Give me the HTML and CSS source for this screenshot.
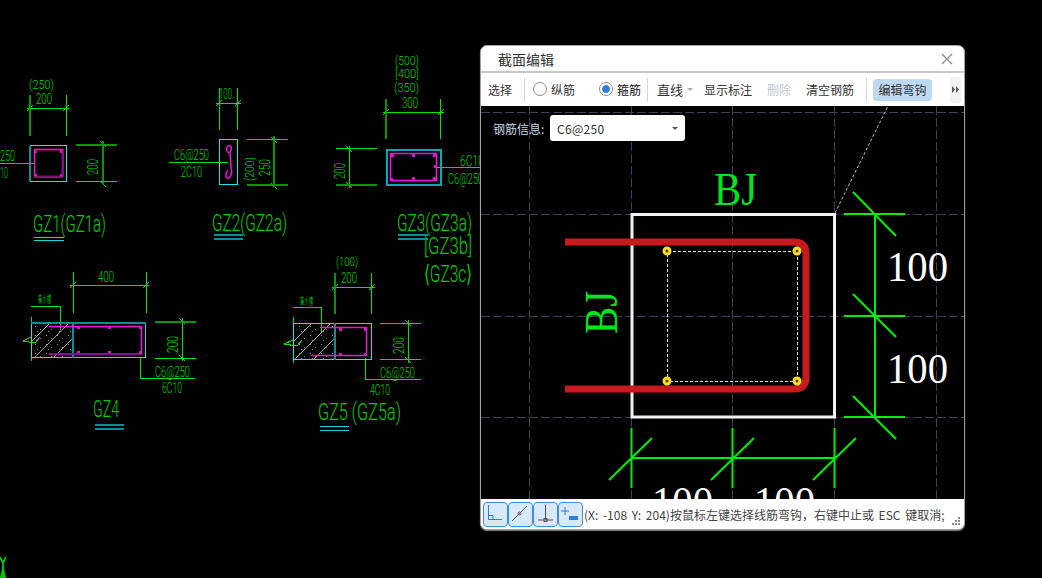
FILE: index.html
```html
<!DOCTYPE html>
<html lang="zh">
<head>
    <meta charset="UTF-8">
    <title>截面编辑</title>
    <link rel="stylesheet" href="styles.css">
</head>
<body>
    <!-- CAD drawing behind the dialog, coordinates are the drawing's own -->
    <svg class="cad" width="1042" height="578" viewBox="0 0 1042 578">
        <defs>
            <clipPath id="wall4"><rect x="31" y="322" width="42" height="36"/></clipPath>
            <clipPath id="wall5"><rect x="293" y="323" width="42" height="37"/></clipPath>
            <pattern id="speck" width="11" height="9" patternUnits="userSpaceOnUse">
                <rect x="2" y="2" width="1" height="1" fill="#999"/>
                <rect x="7" y="5" width="1" height="1" fill="#777"/>
                <rect x="4" y="7" width="1" height="1" fill="#888"/>
            </pattern>
        </defs>

        <!-- GZ1 -->
        <g class="dim">
            <path d="M66.500 95V136M27 108.500H69M27 111L33 105M63 111L69 105M76 181.500H117M100 141L106 147M100 181L106 187M0 163.500H35"/>
            <path class="dark" d="M30 95V136M76 145H117M103 141V184"/>
        </g>
        <rect class="col" x="30.500" y="145.500" width="36" height="36"/>
        <path class="col-dark" d="M30 146V181"/>
        <rect class="bar" x="34.500" y="149.500" width="28" height="27"/>
        <path class="bar-dark" d="M63 150V176M35 177H62"/>
        <path class="pin" d="M35 151h2v2h-2zM60 150h2v3h-2zM35 174h2v2h-2zM60 174h2v2h-2z"/>
        <text class="cad-t paren" x="29" y="89" textLength="25" lengthAdjust="spacingAndGlyphs">(250)</text>
        <text class="cad-t" x="36" y="104" textLength="16" lengthAdjust="spacingAndGlyphs">200</text>
        <text class="cad-t" x="0" y="161" textLength="15" lengthAdjust="spacingAndGlyphs">250</text>
        <text class="cad-t" x="0" y="178" textLength="8" lengthAdjust="spacingAndGlyphs">10</text>
        <text class="cad-t" transform="translate(98 175) rotate(-90)" textLength="16" lengthAdjust="spacingAndGlyphs">200</text>
        <text class="cad-title" x="33" y="232" textLength="73" lengthAdjust="spacingAndGlyphs">GZ1(GZ1a)</text>
        <path class="under" d="M34 237H64M34 240.500H64"/>

        <!-- GZ2 -->
        <g class="dim">
            <path d="M219.500 88V130M237.500 88V130M216 103.500H241M216 106L222 100M235 106L241 100M169 162.500H228M247 139.500H288M271 137L277 143M271 183L277 189"/>
            <path class="dark" d="M274 136V187M247 185H288"/>
        </g>
        <rect class="col" x="219.500" y="139.500" width="18" height="45"/>
        <path class="bar" d="M228 146C232 144 232 150 230 152L231 168C233 172 230 180 227 178C225 176 226 172 228 170"/>
        <path class="bar" d="M228 146C226 148 226 152 229 153"/>
        <text class="cad-t" x="219" y="99" textLength="13" lengthAdjust="spacingAndGlyphs">100</text>
        <text class="cad-t" x="174" y="160" textLength="35" lengthAdjust="spacingAndGlyphs">C6@250</text>
        <text class="cad-t" x="181" y="177" textLength="21" lengthAdjust="spacingAndGlyphs">2C10</text>
        <text class="cad-t paren" transform="translate(254 181) rotate(-90)" textLength="24" lengthAdjust="spacingAndGlyphs">(200)</text>
        <text class="cad-t" transform="translate(270 176) rotate(-90)" textLength="17" lengthAdjust="spacingAndGlyphs">250</text>
        <text class="cad-title" x="212" y="231" textLength="75" lengthAdjust="spacingAndGlyphs">GZ2(GZ2a)</text>
        <path class="under-dark" d="M214 234.500H243M214 238.500H243"/>

        <!-- GZ3 -->
        <g class="dim">
            <path d="M440.500 99V139M383 112.500H444M383 115L389 109M438 115L444 109M336 148.500H377M349.500 146V188M346 146L352 152M346 182L352 188M436 167.500H480"/>
            <path class="dark" d="M386 99V139M336 185H377"/>
        </g>
        <rect class="col-dark-r" x="386.500" y="149.500" width="54" height="35"/>
        <rect class="bar" x="390.500" y="153.500" width="46" height="27"/>
        <path class="pin" d="M391 154h3v3h-3zM412 154h3v3h-3zM433 154h3v3h-3zM391 178h2v2h-2zM412 177h3v3h-3zM433 177h3v3h-3zM434 165h2v3h-2z"/>
        <text class="cad-t paren" x="395" y="65" textLength="24" lengthAdjust="spacingAndGlyphs">(500)</text>
        <text class="cad-t paren" x="395" y="78" textLength="24" lengthAdjust="spacingAndGlyphs">[400]</text>
        <text class="cad-t paren" x="394" y="92" textLength="25" lengthAdjust="spacingAndGlyphs">(350)</text>
        <text class="cad-t" x="402" y="108" textLength="16" lengthAdjust="spacingAndGlyphs">300</text>
        <text class="cad-t" x="460" y="166" textLength="24" lengthAdjust="spacingAndGlyphs">6C10</text>
        <text class="cad-t" x="448" y="184" textLength="35" lengthAdjust="spacingAndGlyphs">C6@250</text>
        <text class="cad-t" transform="translate(345 179) rotate(-90)" textLength="16" lengthAdjust="spacingAndGlyphs">200</text>
        <text class="cad-title" x="397" y="231" textLength="75" lengthAdjust="spacingAndGlyphs">GZ3(GZ3a)</text>
        <text class="cad-title" x="424" y="254" textLength="48" lengthAdjust="spacingAndGlyphs">[GZ3b]</text>
        <text class="cad-title" x="424" y="282" textLength="48" lengthAdjust="spacingAndGlyphs">⟨GZ3c⟩</text>
        <path class="under-dark" d="M398 234.500H428M398 238.500H428"/>

        <!-- GZ4 -->
        <g class="dim">
            <path d="M73.500 272V313M146.500 272V313M70 285.500H149M70 288L76 282M143 288L149 282M155 358.500H196M182.500 318V361M179 318L185 324M179 355L185 361M140.500 358V378.500H195M31 306.500H60.500V330"/>
            <path class="dark" d="M155 322H196"/>
            <path d="M31.500 317V361M31 337L23 341L35 343L40 337"/>
        </g>
        <g clip-path="url(#wall4)">
            <rect x="31" y="322" width="42" height="36" fill="url(#speck)"/>
            <path class="hatch" d="M34 358L70 322M53 358L89 322M15 358L51 322"/>
        </g>
        <rect class="col" x="31.500" y="322.500" width="114" height="35"/>
        <path class="col-dark" d="M31 323H146M73 322V358"/>
        <path class="bar" d="M49 326.500H141.500V354"/>
        <path class="bar-dark" d="M49 354H142"/>
        <path class="pin" d="M77 326h3v3h-3zM108 326h3v3h-3zM139 326h3v3h-3zM77 351h3v2h-3zM108 351h3v2h-3zM139 351h3v3h-3z"/>
        <text class="cad-t note" x="38" y="303" textLength="13" lengthAdjust="spacingAndGlyphs">集水槽</text>
        <text class="cad-t" x="98" y="282" textLength="16" lengthAdjust="spacingAndGlyphs">400</text>
        <text class="cad-t" x="155" y="377" textLength="35" lengthAdjust="spacingAndGlyphs">C6@250</text>
        <text class="cad-t" x="162" y="393" textLength="20" lengthAdjust="spacingAndGlyphs">6C10</text>
        <text class="cad-t" transform="translate(178 353) rotate(-90)" textLength="17" lengthAdjust="spacingAndGlyphs">200</text>
        <text class="cad-title" x="93" y="417" textLength="26" lengthAdjust="spacingAndGlyphs">GZ4</text>
        <path class="under-dark" d="M95 425H124M95 428.500H124"/>

        <!-- GZ5 -->
        <g class="dim">
            <path d="M371.500 273V314M332 287.500H375M332 290L338 284M369 290L375 284M380 323.500H421M380 359.500H421M408.500 320V363M405 320L411 326M405 357L411 363M365.500 358V379.500H421M293 307.500H321.500V332"/>
            <path class="dark" d="M335 273V314"/>
            <path d="M293.500 317V363M293 340L284 344L297 346L302 340"/>
        </g>
        <g clip-path="url(#wall5)">
            <rect x="293" y="323" width="42" height="37" fill="url(#speck)"/>
            <path class="hatch" d="M294 360L331 323M313 360L350 323M275 360L312 323"/>
        </g>
        <rect class="col" x="293.500" y="323.500" width="78" height="36"/>
        <path class="col-dark" d="M335 323V360"/>
        <path class="bar" d="M320 327.500H366.500V355.500H311"/>
        <path class="pin" d="M339 328h3v3h-3zM364 328h3v3h-3zM339 353h3v2h-3zM364 353h3v3h-3z"/>
        <text class="cad-t note" x="300" y="305" textLength="13" lengthAdjust="spacingAndGlyphs">集水槽</text>
        <text class="cad-t paren" x="336" y="266" textLength="22" lengthAdjust="spacingAndGlyphs">(100)</text>
        <text class="cad-t" x="341" y="283" textLength="16" lengthAdjust="spacingAndGlyphs">200</text>
        <text class="cad-t" x="380" y="378" textLength="35" lengthAdjust="spacingAndGlyphs">C6@250</text>
        <text class="cad-t" x="370" y="395" textLength="20" lengthAdjust="spacingAndGlyphs">4C10</text>
        <text class="cad-t" transform="translate(404 354) rotate(-90)" textLength="17" lengthAdjust="spacingAndGlyphs">200</text>
        <text class="cad-title" x="318" y="420" textLength="83" lengthAdjust="spacingAndGlyphs">GZ5 (GZ5a)</text>
        <path class="under" d="M320 426H349M320 430H349"/>

        <!-- axis mark -->
        <path class="axis" d="M0 557L3 563L6 557M3 563V578"/>
        <path class="axis-fill" d="M3 564L0 578H6Z"/>
    </svg>

    <div class="dialog">
        <div class="title-bar">
            <span class="title">截面编辑</span>
            <svg class="close" width="12" height="12" viewBox="0 0 12 12"><path d="M1 1L11 11M11 1L1 11"/></svg>
        </div>

        <div class="toolbar">
            <span class="tool">选择</span>
            <span class="sep sep-a"></span>
            <span class="radio"></span>
            <span class="tool radio-label">纵筋</span>
            <span class="radio radio-on"></span>
            <span class="tool radio-label label-on">箍筋</span>
            <span class="sep sep-b"></span>
            <span class="tool line-type">直线</span>
            <span class="caret caret-grey"></span>
            <span class="tool show-dim">显示标注</span>
            <span class="tool tool-off">删除</span>
            <span class="tool clear-bars">清空钢筋</span>
            <span class="sep sep-c"></span>
            <span class="tool tool-on">编辑弯钩</span>
            <span class="more">
                <svg width="7" height="7" viewBox="0 0 7 7"><path d="M0 0L3 3.500L0 7ZM4 0L7 3.500L4 7Z"/></svg>
            </span>
        </div>

        <div class="canvas">
            <svg class="section-view" width="483" height="393" viewBox="481 106 483 393">
                <path class="grid" d="M529.500 106V499M631.500 106V499M732.500 106V499M834.500 106V499M936.500 106V499M481 112.500H964M481 214.500H964M481 316.500H964M481 417.500H964"/>
                <path class="leader" d="M835 213L888 106"/>
                <rect class="outline" x="632" y="214.500" width="202.500" height="202.500"/>
                <rect class="stirrup-guide" x="667.500" y="251.500" width="130" height="130"/>
                <path class="stirrup" d="M565 242H794Q806 242 806 254V377Q806 389 794 389H565"/>
                <g class="node">
                    <circle cx="667" cy="251" r="3"/>
                    <circle cx="797" cy="251" r="3"/>
                    <circle cx="667" cy="381" r="3"/>
                    <circle cx="797" cy="381" r="3"/>
                </g>
                <text class="label-bj" x="714" y="205" textLength="43" lengthAdjust="spacingAndGlyphs">BJ</text>
                <text class="label-bj" transform="translate(617 334) rotate(-90)" textLength="43" lengthAdjust="spacingAndGlyphs">BJ</text>
                <path class="dim-line" d="M875 214V417M844 214H905M844 316H905M844 417H905M853 192L896 236M853 294L896 337M853 396L896 439M631 458H834M631.500 428V488M732.500 428V488M834.500 428V488M609 480L652 438M711 480L754 438M813 480L856 438"/>
                <text class="label-dim" x="887" y="281" textLength="61" lengthAdjust="spacingAndGlyphs">100</text>
                <text class="label-dim" x="887" y="383" textLength="61" lengthAdjust="spacingAndGlyphs">100</text>
                <text class="label-dim" x="652" y="516" textLength="61" lengthAdjust="spacingAndGlyphs">100</text>
                <text class="label-dim" x="754" y="516" textLength="61" lengthAdjust="spacingAndGlyphs">100</text>
            </svg>
            <div class="bar-info">
                <span class="bar-info-label">钢筋信息:</span>
                <span class="select">C6@250<span class="caret"></span></span>
            </div>
        </div>

        <div class="status-bar">
            <span class="snap">
                <svg width="25" height="25" viewBox="0 0 25 25"><path class="blue-line" d="M5.500 3V17.500H19M5.500 13.500H10V17.500"/></svg>
            </span>
            <span class="snap">
                <svg width="25" height="25" viewBox="0 0 25 25"><path d="M4 19L19 4"/><circle cx="11.500" cy="11.500" r="1.500"/></svg>
            </span>
            <span class="snap">
                <svg width="25" height="25" viewBox="0 0 25 25"><path d="M12.500 3V18M5 18H20"/><rect x="11" y="16.500" width="3" height="3"/></svg>
            </span>
            <span class="snap">
                <svg width="25" height="25" viewBox="0 0 25 25"><path class="blue-line" d="M7 5V13M3 9H11"/><rect class="blue" x="11" y="14" width="9" height="4"/></svg>
            </span>
            <span class="status-text">(X: -108 Y: 204)按鼠标左键选择线筋弯钩，右键中止或 ESC 键取消;</span>
            <svg class="grip" width="9" height="9" viewBox="0 0 9 9">
                <path d="M6 0h2v2h-2zM3 3h2v2h-2zM6 3h2v2h-2zM0 6h2v2h-2zM3 6h2v2h-2zM6 6h2v2h-2z"/>
            </svg>
        </div>
    </div>
</body>
</html>
```

FILE: styles.css
```css
html, body {
    margin: 0;
    padding: 0;
    height: 100%;
    background-color: #000;
    overflow: hidden;
}
.cad {
    display: block;
}

/* drawing */
.dim path {
    fill: none;
    stroke: #00e600;
    stroke-width: 1;
    shape-rendering: crispEdges;
}
.dim path.dark {
    stroke: #009a00;
    stroke-width: 2;
}
.col, .col-dark-r {
    fill: none;
    stroke: #19e6e6;
    stroke-width: 1;
    shape-rendering: crispEdges;
}
.col-dark-r {
    stroke: #0ba8b0;
    stroke-width: 2;
}
.col-dark {
    fill: none;
    stroke: #0a8f98;
    stroke-width: 2;
    shape-rendering: crispEdges;
}
.bar {
    fill: none;
    stroke: #f010e0;
    stroke-width: 1.500;
}
.bar-dark {
    fill: none;
    stroke: #8c0a8c;
    stroke-width: 2;
    shape-rendering: crispEdges;
}
.pin {
    fill: #e012d0;
}
.hatch {
    fill: none;
    stroke: #a8a8a8;
    stroke-width: 1;
}
.under {
    fill: none;
    stroke: #12d8d8;
    stroke-width: 1;
    shape-rendering: crispEdges;
}
.under-dark {
    fill: none;
    stroke: #0a8f98;
    stroke-width: 2;
    shape-rendering: crispEdges;
}
.cad-t {
    font-family: Roboto, "Liberation Sans", sans-serif;
    font-weight: 300;
    font-size: 15px;
    fill: #00d800;
}
.cad-t.paren {
    font-size: 13px;
}
.cad-t.note {
    font-family: "Noto Sans CJK SC", sans-serif;
    font-size: 10px;
}
.cad-title {
    font-family: Roboto, "Liberation Sans", sans-serif;
    font-weight: 300;
    font-size: 24px;
    fill: #00d000;
}
.axis {
    fill: none;
    stroke: #00e600;
    stroke-width: 1.500;
}
.axis-fill {
    fill: #00c800;
}

/* dialog window */
.dialog {
    position: absolute;
    left: 480px;
    top: 45px;
    width: 485px;
    height: 485px;
    box-sizing: border-box;
    display: flex;
    flex-direction: column;
    background-color: #fff;
    border-radius: 7px;
    border: 1px solid #a0a0a0;
    box-shadow: 0 1px 1px rgba(160, 160, 160, 0.8);
    overflow: hidden;
    font-family: "Noto Sans CJK SC", "Noto Sans", sans-serif;
    font-size: 12px;
    color: #333;
}
.title-bar {
    height: 27px;
    box-sizing: border-box;
    flex: none;
    display: flex;
    align-items: center;
    justify-content: space-between;
    padding: 0 11px 0 17px;
    border-bottom: 2px solid #c8c8c8;
}
.title {
    font-size: 14px;
    color: #333;
}
.close {
    margin-top: 1px;
}
.close path {
    fill: none;
    stroke: #8a8a8a;
    stroke-width: 1.200;
}

.toolbar {
    height: 33px;
    flex: none;
    display: flex;
    align-items: center;
    padding-left: 7px;
    background-color: #fff;
}
.tool {
    white-space: nowrap;
}
.sep {
    width: 1px;
    height: 24px;
    background-color: #d8d8d8;
}
.sep-a {
    margin: 0 8px 0 12px;
}
.sep-b {
    margin: 0 9px 0 6px;
}
.sep-c {
    margin: 0 6px 0 12px;
}
.radio {
    width: 14px;
    height: 14px;
    box-sizing: border-box;
    border: 1px solid #8e8e8e;
    border-radius: 50%;
    background-color: #fff;
    margin-top: -2px;
}
.radio-on {
    background: radial-gradient(circle, #2a7de1 0, #2a7de1 3.500px, #fff 4.200px);
}
.radio-label {
    margin: 0 24px 0 4px;
}
.label-on {
    margin-right: 0;
    color: #111;
}
.line-type {
    font-size: 13px;
}
.caret {
    display: inline-block;
    width: 0;
    height: 0;
    border-left: 3px solid transparent;
    border-right: 3px solid transparent;
    border-top: 3px solid #555;
}
.caret-grey {
    border-top-color: #aaa;
    margin-left: 4px;
}
.show-dim {
    margin-left: 11px;
}
.tool-off {
    margin-left: 15px;
    color: #c2c6d2;
}
.clear-bars {
    margin-left: 15px;
}
.tool-on {
    width: 59px;
    height: 22px;
    line-height: 22px;
    text-align: center;
    border-radius: 4px;
    background-color: #bfd9f2;
}
.more {
    width: 11px;
    height: 26px;
    margin-left: 18px;
    display: flex;
    align-items: center;
    justify-content: center;
    border-radius: 3px;
    background-color: #f2f2f2;
}
.more path {
    fill: #555;
}

.canvas {
    flex: 1;
    position: relative;
    overflow: hidden;
    background-color: #000;
}
.section-view {
    display: block;
}
.grid {
    fill: none;
    stroke: #3a4252;
    stroke-width: 1;
    stroke-dasharray: 9 3;
    shape-rendering: crispEdges;
}
.leader {
    fill: none;
    stroke: #b8b8b8;
    stroke-width: 1;
    stroke-dasharray: 3 2;
}
.outline {
    fill: none;
    stroke: #f2f2f2;
    stroke-width: 3;
}
.stirrup-guide {
    fill: none;
    stroke: #dfe8f0;
    stroke-width: 1;
    stroke-dasharray: 3 2;
    shape-rendering: crispEdges;
}
.stirrup {
    fill: none;
    stroke: #c8191f;
    stroke-width: 7;
}
.node circle {
    fill: #4a4420;
    stroke: #ffdf20;
    stroke-width: 3;
}
.label-bj {
    font-family: "Liberation Serif", serif;
    font-size: 46px;
    fill: #00e61e;
}
.label-dim {
    font-family: "Liberation Serif", serif;
    font-size: 43px;
    fill: #fff;
}
.dim-line {
    fill: none;
    stroke: #00f000;
    stroke-width: 2;
}
.bar-info {
    position: absolute;
    left: 12px;
    top: 9px;
    display: flex;
    align-items: center;
}
.bar-info-label {
    width: 57px;
    color: #c6d8e8;
}
.select {
    width: 135px;
    height: 26px;
    box-sizing: border-box;
    padding: 0 7px;
    display: flex;
    align-items: center;
    justify-content: space-between;
    background-color: #fff;
    border-radius: 3px;
    font-size: 12px;
    letter-spacing: 0.3px;
    color: #333;
}

.status-bar {
    height: 30px;
    flex: none;
    display: flex;
    align-items: center;
    padding-left: 2px;
    background-color: #fff;
    position: relative;
}
.snap {
    width: 25px;
    height: 25px;
    box-sizing: border-box;
    display: block;
    border: 1px solid #3b8de8;
    border-radius: 4px;
    background-color: #d9e9fc;
}
.snap svg {
    display: block;
    margin: -1px;
}
.snap path, .snap rect, .snap circle {
    fill: none;
    stroke: #555;
    stroke-width: 1;
}
.snap path.blue-line {
    stroke: #2b7de0;
}
.snap rect.blue {
    fill: #2b7de0;
    stroke: none;
}
.status-text {
    margin-left: 1px;
    white-space: nowrap;
    word-spacing: 2px;
    color: #444;
}
.grip {
    position: absolute;
    right: 3px;
    bottom: 3px;
}
.grip path {
    fill: #888;
}
```
